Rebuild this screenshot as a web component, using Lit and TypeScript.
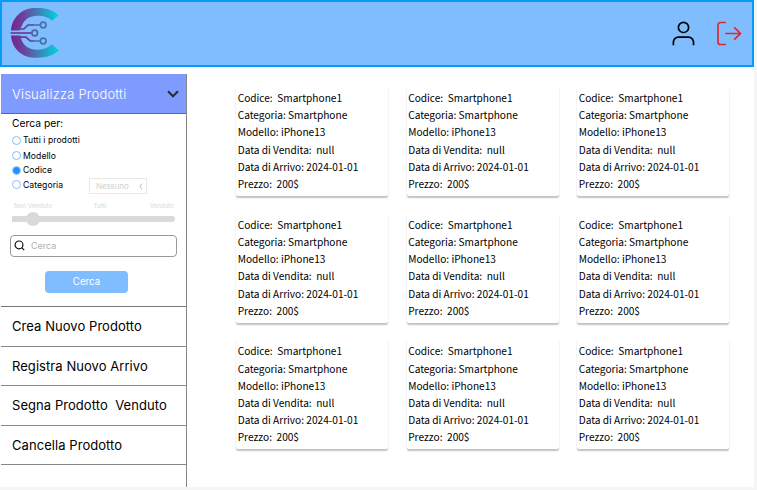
import { LitElement, html, css } from "lit";
import { customElement, property, state } from "lit/decorators.js";
import { classMap } from "lit/directives/class-map.js";

@customElement("top-bar")
class TopBar extends LitElement {
  static styles = css`
    :host { display: flex; box-sizing: border-box; height: 67px; border: 2px solid #059bfb;
      background: #80bdff; justify-content: space-between; padding: 0 10px 0 8px; }
    .logo { display: block; margin-top: 5px; }
    .actions { display: flex; gap: 20px; padding-top: 18px; }
    svg { display: block; }
  `;
  render() {
    return html`
      <svg class="logo" width="51" height="52" viewBox="10 7 51 52" fill="none">
        <defs>
          <linearGradient id="g" gradientUnits="userSpaceOnUse" x1="11" y1="0" x2="57" y2="0">
            <stop offset="0" stop-color="#74238c"/><stop offset=".25" stop-color="#6c3f9c"/>
            <stop offset=".6" stop-color="#3f82b6"/><stop offset="1" stop-color="#00d0dc"/>
          </linearGradient>
        </defs>
        <path fill="url(#g)" d="M11 30.500C12 17.500 22 8 34.500 8H38c8.500 0 15.500 2.500 20.500 7.200L52 20.800C48.500 17.500 44 15.800 38 15.800c-8.500 0-13.500 3.700-16 9.700L19.500 30.500zM11 35.500H20.500C21.500 44.500 28 49.700 37 49.700c6.500 0 11-1.700 15-5.400l6.800 6.200C53 55.500 46.500 57.700 38 57.700h-3.500C22 57.700 12 48.500 11 35.500z"/>
        <g stroke="#6b3a97" stroke-width="1.700">
          <path d="M10.500 33H31.500"/>
          <path d="M19.500 29h4.300l4.200-4h6M20 37.200h6l4.200 3.800H34"/>
          <path d="M33 25h7.300M33 41h7.300" stroke="#4d6ba5"/>
        </g>
        <g stroke="#3f75ac" stroke-width="1.700">
          <circle cx="43.200" cy="25" r="2.800"/><circle cx="34.700" cy="33" r="2.800" stroke="#51639f"/><circle cx="43.200" cy="41" r="2.800"/>
        </g>
      </svg>
      <div class="actions">
        <svg width="24" height="27" viewBox="0 0 24 27" fill="none" stroke="#000" stroke-width="1.700">
          <circle cx="11.500" cy="7.400" r="5.100"/>
          <path d="M1.400 25.300v-3.200a5 5 0 0 1 5-5H16.500a5 5 0 0 1 5 5v3.200"/>
        </svg>
        <svg width="26" height="27" viewBox="0 0 26 27" fill="none" stroke="#e02830" stroke-width="1.700">
          <path d="M10 2.500H4.500a2.500 2.500 0 0 0-2.500 2.500v17a2.500 2.500 0 0 0 2.500 2.500H10M9.200 13.500H24.500M18.200 7.300l6.300 6.200-6.300 6.200"/>
        </svg>
      </div>`;
  }
}

@customElement("product-card")
class ProductCard extends LitElement {
  @property({ attribute: false }) rows: string[] = [];
  static styles = css`
    :host { display: block; box-sizing: border-box; width: 152px; height: 109px; padding: 2.100px 0 0 1.700px;
      border-radius: 2px; background: #fff; box-shadow: 0 1.500px 1.500px rgba(0,0,0,.24);
      font: 10.150px/17.200px "Noto Sans CJK SC", sans-serif; color: #000; }
    .row { height: 17.200px; white-space: pre; }
  `;
  render() { return this.rows.map((r) => html`<div class="row">${r}</div>`); }
}

@customElement("side-menu")
class SideMenu extends LitElement {
  @state() private selected = "Codice";
  static styles = css`
    :host { display: block; box-sizing: border-box; width: 186px; height: 413px; border-right: 1px solid #858585;
      font-family: Inter, sans-serif; color: #000; }
    * { box-sizing: border-box; }
    svg { display: block; }
    .head { display: flex; align-items: center; justify-content: space-between; height: 40px; padding: 0 7px 0 11px;
      background: #809bff; border-bottom: 1px solid #59649a; color: #fff; font-size: 13px; font-weight: 300; }
    .title { letter-spacing: .2px; }
    .panel { height: 193px; border-bottom: 1px solid #777; padding: 1px 10px 0 9px; }
    .label { font-size: 10.300px; line-height: 16px; padding-left: 2px; margin-bottom: 1px; }
    .options { position: relative; display: grid; grid-template-rows: 16px 15px 14.500px 14px; padding-left: 1.500px; }
    .opt { display: flex; align-items: center; gap: 2.500px; font-size: 8.650px; letter-spacing: .05px; }
    .dot { width: 9px; height: 9px; border: 1px solid #84bfff; border-radius: 50%; }
    .dot.on { background: radial-gradient(circle, #1e90ff 3px, #8dc6ff 3.800px); }
    .select { position: absolute; left: 79px; bottom: -2.500px; width: 58px; height: 16px; border: 1px solid #e8e8e8;
      display: flex; align-items: center; justify-content: space-between; padding: 0 3px 0 6px; color: #d0d0d0; font-size: 8px; letter-spacing: -.1px; }
    .ticks { display: flex; justify-content: space-between; margin: 10px 2px 0 4px; font-size: 6.200px; line-height: 8px; color: #d9d9d9; }
    .ticks span:nth-child(2) { margin-right: 2px; }
    .slider { display: flex; align-items: center; height: 14px; margin: 2px 1px 0 2px; }
    .track { height: 6px; flex: 1; background: #d9d9d9; border-radius: 0 3px 3px 0; display: flex; align-items: center; }
    .thumb { width: 14px; height: 14px; border-radius: 50%; background: #d9d9d9; margin-left: 14px; }
    .search { display: flex; align-items: center; gap: 6px; height: 22px; width: 167px; margin-top: 9px; border: 1px solid #999;
      border-radius: 4px; padding-left: 3px; color: #b0b0b0; font-size: 9px; }
    .go { display: flex; align-items: center; justify-content: center; width: 83px; height: 22px; margin: 14px 0 0 35px;
      background: #80bdff; color: #fff; border-radius: 4px; font-size: 9.700px; }
    .item { height: 39.600px; padding-left: 11px; border-bottom: 1px solid #888; font-size: 13px; letter-spacing: .06px; line-height: 39px; white-space: pre; }
  `;
  render() {
    return html`
      <div class="head"><span class="title">Visualizza Prodotti</span>
        <svg width="12" height="8" viewBox="0 0 12 8" fill="none" stroke="#2d2d2d" stroke-width="2"><path d="M1 1.300l5 5 5-5"/></svg>
      </div>
      <div class="panel">
        <div class="label">Cerca per:</div>
        <div class="options">
          ${["Tutti i prodotti", "Modello", "Codice", "Categoria"].map((o) => html`
            <div class="opt" @click=${() => (this.selected = o)}>
              <span class=${classMap({ dot: true, on: this.selected === o })}></span><span>${o}</span></div>`)}
          <div class="select"><span>Nessuno</span>
            <svg width="4" height="7" viewBox="0 0 4 7" fill="none" stroke="#bcbcbc" stroke-width="1"><path d="M3 .5L1 3.500l2 3"/></svg>
          </div>
        </div>
        <div class="ticks"><span>Non Venduto</span><span>Tutti</span><span>Venduto</span></div>
        <div class="slider"><div class="track"><div class="thumb"></div></div></div>
        <div class="search">
          <svg width="11" height="11" viewBox="0 0 11 11" fill="none" stroke="#111" stroke-width="1.200"><circle cx="5" cy="4.900" r="3.900"/><path d="M7.700 7.700l2.500 2.500"/></svg>
          <span>Cerca</span></div>
        <div class="go">Cerca</div>
      </div>
      ${["Crea Nuovo Prodotto", "Registra Nuovo Arrivo", "Segna Prodotto  Venduto", "Cancella Prodotto"].map((t) => html`<div class="item">${t}</div>`)}`;
  }
}

const product = [
  "Codice:  Smartphone1", "Categoria: Smartphone", "Modello: iPhone13",
  "Data di Vendita:  null", "Data di Arrivo: 2024-01-01", "Prezzo:  200$",
];

@customElement("app-root")
class AppRoot extends LitElement {
  static styles = css`
    :host { display: block; height: 490px; background: #f5f5f5; overflow: hidden; }
    .page { width: 754px; height: 487px; background: #fff; }
    .body { display: flex; padding: 7px 0 0 1px; }
    .grid { display: grid; grid-template-columns: repeat(3, 152px); column-gap: 18.500px; row-gap: 17.700px; align-content: start;
      margin: 13px 0 0 49px; }
  `;
  render() {
    return html`<div class="page"><top-bar></top-bar>
      <div class="body"><side-menu></side-menu>
        <div class="grid">${Array.from({ length: 9 }, () => html`<product-card .rows=${product}></product-card>`)}</div>
      </div></div>`;
  }
}
